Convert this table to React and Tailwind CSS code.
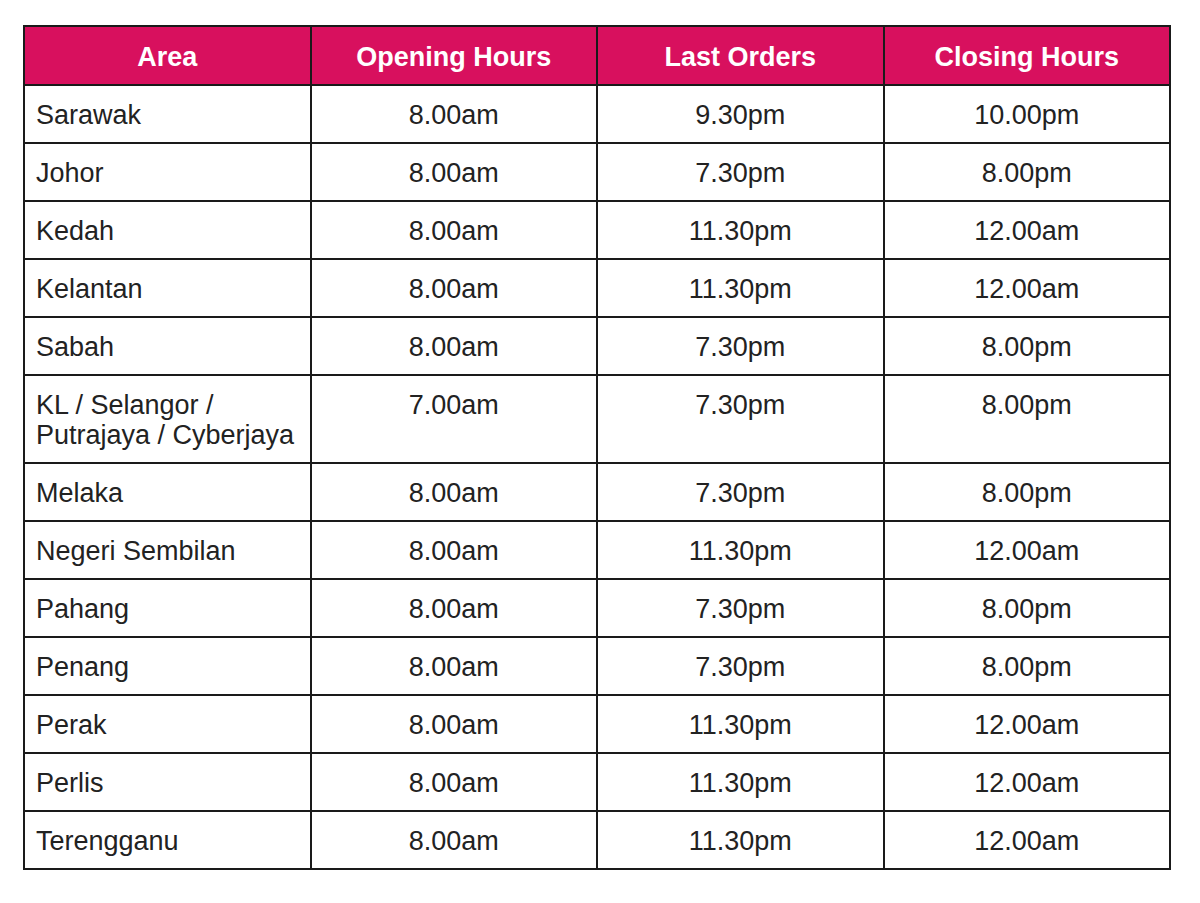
import React from "react";

const rows = [
  ["Sarawak", "8.00am", "9.30pm", "10.00pm"],
  ["Johor", "8.00am", "7.30pm", "8.00pm"],
  ["Kedah", "8.00am", "11.30pm", "12.00am"],
  ["Kelantan", "8.00am", "11.30pm", "12.00am"],
  ["Sabah", "8.00am", "7.30pm", "8.00pm"],
  ["KL / Selangor /\nPutrajaya / Cyberjaya", "7.00am", "7.30pm", "8.00pm"],
  ["Melaka", "8.00am", "7.30pm", "8.00pm"],
  ["Negeri Sembilan", "8.00am", "11.30pm", "12.00am"],
  ["Pahang", "8.00am", "7.30pm", "8.00pm"],
  ["Penang", "8.00am", "7.30pm", "8.00pm"],
  ["Perak", "8.00am", "11.30pm", "12.00am"],
  ["Perlis", "8.00am", "11.30pm", "12.00am"],
  ["Terengganu", "8.00am", "11.30pm", "12.00am"],
];

const headers = ["Area", "Opening Hours", "Last Orders", "Closing Hours"];

export default function App() {
  return (
    <div
      className="w-[1200px] h-[903px] bg-white pt-[25px] pl-[23px]"
      style={{ fontFamily: '"Liberation Sans", Arial, sans-serif' }}
    >
      <table className="border-collapse border-2 border-[#1a1a1a] w-[1148px] table-fixed text-[27px] leading-[30px] text-[#222]">
        <thead>
          <tr className="bg-[#d8105e]">
            {headers.map((h) => (
              <th
                key={h}
                className="border-2 border-[#1a1a1a] h-[59px] pt-[2px] pb-0 text-white font-bold text-center"
              >
                {h}
              </th>
            ))}
          </tr>
        </thead>
        <tbody>
          {rows.map((r) => (
            <tr key={r[0]}>
              {r.map((c, i) => (
                <td
                  key={i}
                  className={
                    "border-2 border-[#1a1a1a] align-top pt-[14px] pb-[12px] whitespace-pre-line " +
                    (i === 0 ? "text-left pl-[11px]" : "text-center")
                  }
                >
                  {c}
                </td>
              ))}
            </tr>
          ))}
        </tbody>
      </table>
    </div>
  );
}
